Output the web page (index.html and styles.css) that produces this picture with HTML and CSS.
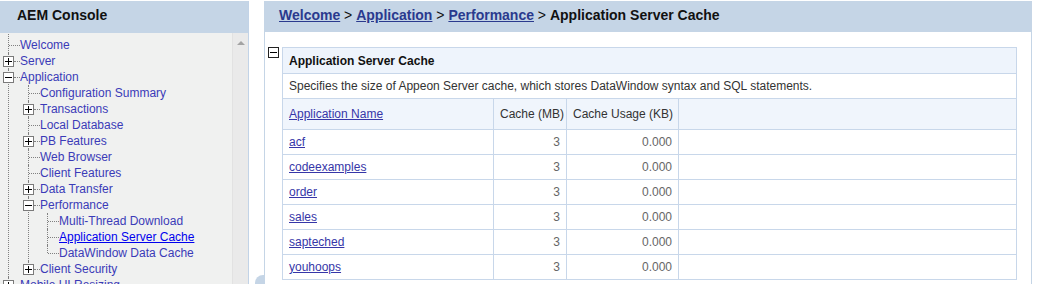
FILE: index.html
```html
<!DOCTYPE html>
<html lang="en">
<head>
    <meta charset="UTF-8">
    <title>AEM Console - Application Server Cache</title>
    <link rel="stylesheet" href="styles.css">
</head>
<body>
    <div class="console">
        <!-- Navigation tree -->
        <aside class="nav-panel">
            <div class="nav-header">AEM Console</div>
            <div class="nav-body">
                <ul class="tree">
                    <li><div class="row"><span class="twig leaf"><i class="dots"></i></span><a href="#">Welcome</a></div></li>
                    <li><div class="row"><span class="twig"><b class="box plus"></b><i class="dots"></i></span><a href="#">Server</a></div></li>
                    <li>
                        <div class="row"><span class="twig"><b class="box minus"></b><i class="dots"></i></span><a href="#">Application</a></div>
                        <ul>
                            <li><div class="row"><span class="twig leaf"><i class="dots"></i></span><a href="#">Configuration Summary</a></div></li>
                            <li><div class="row"><span class="twig"><b class="box plus"></b><i class="dots"></i></span><a href="#">Transactions</a></div></li>
                            <li><div class="row"><span class="twig leaf"><i class="dots"></i></span><a href="#">Local Database</a></div></li>
                            <li><div class="row"><span class="twig"><b class="box plus"></b><i class="dots"></i></span><a href="#">PB Features</a></div></li>
                            <li><div class="row"><span class="twig leaf"><i class="dots"></i></span><a href="#">Web Browser</a></div></li>
                            <li><div class="row"><span class="twig leaf"><i class="dots"></i></span><a href="#">Client Features</a></div></li>
                            <li><div class="row"><span class="twig"><b class="box plus"></b><i class="dots"></i></span><a href="#">Data Transfer</a></div></li>
                            <li>
                                <div class="row"><span class="twig"><b class="box minus"></b><i class="dots"></i></span><a href="#">Performance</a></div>
                                <ul class="deep">
                                    <li><div class="row"><span class="twig leaf"><i class="dots"></i></span><a href="#">Multi-Thread Download</a></div></li>
                                    <li><div class="row"><span class="twig leaf"><i class="dots"></i></span><a href="#" class="current">Application Server Cache</a></div></li>
                                    <li><div class="row"><span class="twig leaf"><i class="dots"></i></span><a href="#">DataWindow Data Cache</a></div></li>
                                </ul>
                            </li>
                            <li><div class="row"><span class="twig"><b class="box plus"></b><i class="dots"></i></span><a href="#">Client Security</a></div></li>
                        </ul>
                    </li>
                    <li><div class="row"><span class="twig"><b class="box plus"></b><i class="dots"></i></span><a href="#">Mobile UI Resizing</a></div></li>
                </ul>
                <div class="scrollbar"><span class="arrow-up"></span></div>
            </div>
        </aside>

        <div class="splitter"><span class="grip"></span></div>

        <!-- Main content -->
        <main class="content-panel">
            <div class="crumbs">
                <a href="#">Welcome</a><span class="sep"> &gt; </span><a href="#">Application</a><span class="sep"> &gt; </span><a href="#">Performance</a><span class="sep"> &gt; </span>Application Server Cache
            </div>
            <div class="content-body">
                <b class="box minus dark"></b>
                <table class="cache-table">
                    <colgroup>
                        <col class="col-name">
                        <col class="col-cache">
                        <col class="col-usage">
                        <col>
                    </colgroup>
                    <tr class="title-row"><td colspan="4">Application Server Cache</td></tr>
                    <tr class="desc-row"><td colspan="4">Specifies the size of Appeon Server cache, which stores DataWindow syntax and SQL statements.</td></tr>
                    <tr class="head-row">
                        <th class="left"><a href="#">Application Name</a></th>
                        <th>Cache (MB)</th>
                        <th>Cache Usage (KB)</th>
                        <th></th>
                    </tr>
                    <tr><td><a href="#">acf</a></td><td class="num">3</td><td class="num">0.000</td><td></td></tr>
                    <tr><td><a href="#">codeexamples</a></td><td class="num">3</td><td class="num">0.000</td><td></td></tr>
                    <tr><td><a href="#">order</a></td><td class="num">3</td><td class="num">0.000</td><td></td></tr>
                    <tr><td><a href="#">sales</a></td><td class="num">3</td><td class="num">0.000</td><td></td></tr>
                    <tr><td><a href="#">sapteched</a></td><td class="num">3</td><td class="num">0.000</td><td></td></tr>
                    <tr><td><a href="#">youhoops</a></td><td class="num">3</td><td class="num">0.000</td><td></td></tr>
                </table>
            </div>
        </main>
    </div>
</body>
</html>
```

FILE: styles.css
```css
* {
    margin: 0;
    padding: 0;
    box-sizing: border-box;
}

body {
    font-family: "Liberation Sans", Arial, sans-serif;
    font-size: 12px;
    color: #333;
    background-color: #fff;
    height: 284px;
    overflow: hidden;
    padding-top: 1px;
}

.console {
    display: flex;
    height: 283px;
}

/* Left navigation */
.nav-panel {
    flex: none;
    width: 249px;
    display: flex;
    flex-direction: column;
    border-right: 1px solid #c2d3e7;
}

.nav-header {
    height: 32px;
    background-color: #c5d5e6;
    padding-left: 17px;
    font-size: 14px;
    font-weight: bold;
    line-height: 29px;
    color: #111;
}

.nav-body {
    flex: 1;
    display: flex;
    overflow: hidden;
    background-color: #f0f1f0;
}

.tree {
    flex: 1;
    list-style: none;
    padding-top: 4px;
    overflow: hidden;
}

.tree ul {
    list-style: none;
    margin-left: 20px;
}

.tree ul.deep {
    margin-left: 19px;
}

.tree li {
    position: relative;
}

/* vertical connector */
.tree li::before {
    content: "";
    position: absolute;
    left: 8px;
    top: 0;
    bottom: 0;
    border-left: 1px dotted #808080;
}

.tree li:last-child::before {
    bottom: auto;
    height: 8px;
}

.tree > li:first-child::before {
    top: -3px;
}

.row {
    display: flex;
    height: 16px;
    line-height: 16px;
    white-space: nowrap;
}

.twig {
    flex: none;
    width: 20px;
    height: 16px;
    display: flex;
    align-items: center;
}

.twig.leaf {
    padding-left: 9px;
}

.dots {
    flex: 1;
    height: 1px;
    border-top: 1px dotted #808080;
}

.box {
    position: relative;
    z-index: 1;
    flex: none;
    display: block;
    width: 11px;
    height: 11px;
    margin-left: 3px;
    border: 1px solid #7a7a7a;
    background-color: #fff;
}

.box.plus {
    background:
        linear-gradient(#000, #000) center / 7px 1px no-repeat,
        linear-gradient(#000, #000) center / 1px 7px no-repeat,
        #fff;
}

.box.minus {
    background:
        linear-gradient(#000, #000) center / 7px 1px no-repeat,
        #fff;
}

.tree a {
    color: #3b3bb8;
    text-decoration: none;
}

.tree a.current {
    color: #0000ee;
    text-decoration: underline;
}

.scrollbar {
    flex: none;
    width: 16px;
    background-color: #eaeaea;
    border-left: 1px solid #e2e2e2;
    display: flex;
    justify-content: center;
    padding-top: 8px;
}

.arrow-up {
    width: 0;
    height: 0;
    border-left: 4px solid transparent;
    border-right: 4px solid transparent;
    border-bottom: 4px solid #a3a3a3;
}

/* Splitter between panels */
.splitter {
    flex: none;
    width: 15px;
    display: flex;
    align-items: flex-end;
}

.grip {
    width: 9px;
    height: 9px;
    margin-left: 6px;
    background-color: #c5d5e6;
    border-top-left-radius: 8px;
}

/* Right content */
.content-panel {
    flex: none;
    width: 768px;
    border-left: 1px solid #c5d5e6;
    border-right: 1px solid #c5d5e6;
}

.crumbs {
    height: 31px;
    background-color: #c5d5e6;
    padding-left: 14px;
    font-size: 14px;
    font-weight: bold;
    line-height: 29px;
    color: #111;
    white-space: nowrap;
}

.crumbs a {
    color: #2a3a8e;
}

.crumbs .sep {
    font-weight: normal;
}

.content-body {
    display: flex;
    align-items: flex-start;
    gap: 3px;
    padding: 15px 14px 0 3px;
}

.box.dark {
    margin-left: 0;
    border-color: #222;
}

.cache-table {
    width: 735px;
    border-collapse: collapse;
    table-layout: fixed;
}

.col-name {
    width: 211px;
}

.col-cache {
    width: 73px;
}

.col-usage {
    width: 112px;
}

.cache-table td,
.cache-table th {
    border: 1px solid #c8d7ea;
    padding: 0 6px;
    height: 25px;
    font-weight: normal;
    text-align: right;
    vertical-align: middle;
    white-space: nowrap;
    color: #333;
}

.cache-table td {
    text-align: left;
}

.cache-table .title-row td {
    height: 26px;
    background-color: #eef4fc;
    font-weight: bold;
    color: #111;
}

.cache-table .head-row th {
    height: 31px;
    background-color: #f0f5fc;
}

.cache-table th.left {
    text-align: left;
}

.cache-table td.num {
    text-align: right;
    color: #666;
}

.cache-table a {
    color: #3636a8;
}
```
